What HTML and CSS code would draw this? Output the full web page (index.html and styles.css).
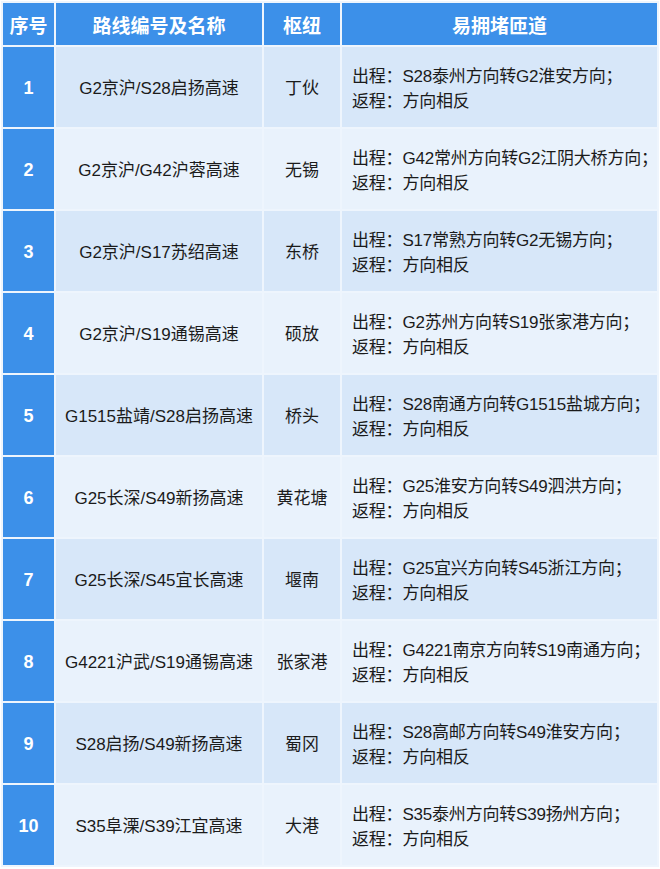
FILE: index.html
```html
<!DOCTYPE html>
<html lang="zh">
<head>
<meta charset="utf-8">
<link rel="stylesheet" href="styles.css">
</head>
<body>
<table class="tbl">
  <colgroup>
    <col class="c-no"><col class="c-route"><col class="c-hub"><col class="c-ramp">
  </colgroup>
  <thead>
    <tr><th>序号</th><th>路线编号及名称</th><th>枢纽</th><th>易拥堵匝道</th></tr>
  </thead>
  <tbody>
    <tr class="odd"><td class="no">1</td><td>G2京沪/S28启扬高速</td><td>丁伙</td><td class="ramp">出程：S28泰州方向转G2淮安方向；<br>返程：方向相反</td></tr>
    <tr class="even"><td class="no">2</td><td>G2京沪/G42沪蓉高速</td><td>无锡</td><td class="ramp">出程：G42常州方向转G2江阴大桥方向；<br>返程：方向相反</td></tr>
    <tr class="odd"><td class="no">3</td><td>G2京沪/S17苏绍高速</td><td>东桥</td><td class="ramp">出程：S17常熟方向转G2无锡方向；<br>返程：方向相反</td></tr>
    <tr class="even"><td class="no">4</td><td>G2京沪/S19通锡高速</td><td>硕放</td><td class="ramp">出程：G2苏州方向转S19张家港方向；<br>返程：方向相反</td></tr>
    <tr class="odd"><td class="no">5</td><td>G1515盐靖/S28启扬高速</td><td>桥头</td><td class="ramp">出程：S28南通方向转G1515盐城方向；<br>返程：方向相反</td></tr>
    <tr class="even"><td class="no">6</td><td>G25长深/S49新扬高速</td><td>黄花塘</td><td class="ramp">出程：G25淮安方向转S49泗洪方向；<br>返程：方向相反</td></tr>
    <tr class="odd"><td class="no">7</td><td>G25长深/S45宜长高速</td><td>堰南</td><td class="ramp">出程：G25宜兴方向转S45浙江方向；<br>返程：方向相反</td></tr>
    <tr class="even"><td class="no">8</td><td>G4221沪武/S19通锡高速</td><td>张家港</td><td class="ramp">出程：G4221南京方向转S19南通方向；<br>返程：方向相反</td></tr>
    <tr class="odd"><td class="no">9</td><td>S28启扬/S49新扬高速</td><td>蜀冈</td><td class="ramp">出程：S28高邮方向转S49淮安方向；<br>返程：方向相反</td></tr>
    <tr class="even"><td class="no">10</td><td>S35阜溧/S39江宜高速</td><td>大港</td><td class="ramp">出程：S35泰州方向转S39扬州方向；<br>返程：方向相反</td></tr>
  </tbody>
</table>
</body>
</html>
```
FILE: styles.css
```css
html, body {
  margin: 0;
  padding: 0;
  background: #ffffff;
}
body {
  font-family: "Liberation Sans", "Noto Sans CJK SC", sans-serif;
  color: #1b1b1b;
}
.tbl {
  margin: 1px;
  width: 658px;
  table-layout: fixed;
  border-collapse: separate;
  border-spacing: 2px;
  background: #eef5fd;
}
.c-no { width: 51px; }
.c-route { width: 206px; }
.c-hub { width: 76px; }
.c-ramp { width: 315px; }
.tbl th, .tbl td {
  box-sizing: border-box;
  padding: 0;
  text-align: center;
  vertical-align: middle;
}
.tbl th {
  height: 42px;
  background: #3c90e9;
  color: #ffffff;
  font-size: 19px;
  font-weight: bold;
}
.tbl td {
  height: 80px;
  font-size: 17px;
  line-height: 25px;
  padding-top: 3px;
}
.odd td { background: #d7e7f9; }
.even td { background: #e9f2fc; }
.tbl td.no {
  background: #3c90e9;
  color: #ffffff;
  font-weight: bold;
  font-size: 18px;
}
.tbl td.ramp {
  text-align: left;
  padding-left: 10px;
  letter-spacing: -0.2px;
  white-space: nowrap;
}
```
